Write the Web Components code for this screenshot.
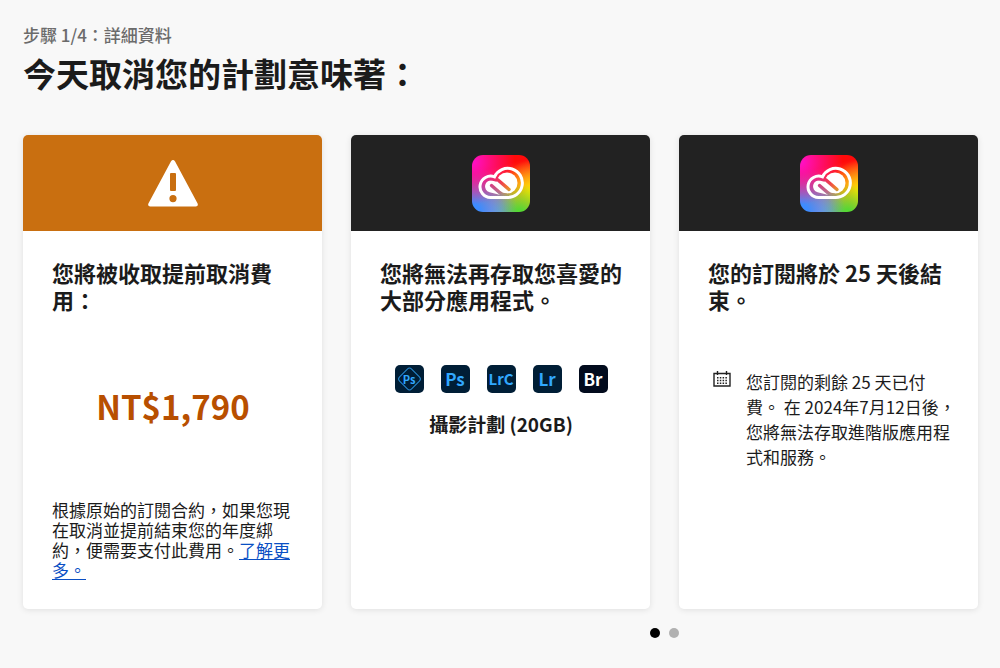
<!DOCTYPE html>
<html lang="zh-Hant">
<head>
<meta charset="utf-8">
<meta name="viewport" content="width=device-width, initial-scale=1">
<title>取消計劃</title>
<style>
body {
    margin: 0;
    background: #f8f8f8;
    color: #1b1b1b;
    font-family: "Noto Sans CJK TC", "Noto Sans", sans-serif;
}
</style>
</head>
<body>
<x-cancel-page></x-cancel-page>

<script>
'use strict';

const define = (name, html) => {
    customElements.define(name, class extends HTMLElement {
        constructor() {
            super();
            this.attachShadow({mode: 'open'}).innerHTML = html;
        }
    });
};

define('x-alert-icon', /*html*/`
    <style>
    :host, svg {
        display: block;
    }
    </style>
    <svg width="50" height="48" viewBox="0 0 50 48" aria-hidden="true">
        <path fill="#fff" fill-rule="evenodd" d="M22.900 2.500Q25-.3 27.100 2.500L49.600 44.500Q50.600 47.500 47.800 47.500H2.200Q-.6 47.500.4 44.500ZM23 14Q22 14 22 15V31Q22 32 23 32H27Q28 32 28 31V15Q28 14 27 14ZM25 36A3.600 3.600 0 1 0 25 43.200A3.600 3.600 0 1 0 25 36Z"/>
    </svg>
`);

define('x-cloud-logo', /*html*/`
    <style>
    :host {
        display: block;
        width: 58px;
        height: 57px;
        border-radius: 11px;
        background:
            radial-gradient(circle at 0% 12%, #ff10c0 4%, rgba(255, 16, 192, 0) 56%),
            radial-gradient(circle at 0% 100%, #3d8cff 10%, rgba(110, 120, 255, 0) 56%),
            radial-gradient(circle at 82% 104%, #56d832 6%, rgba(110, 216, 50, 0) 40%),
            radial-gradient(circle at 104% 66%, #ffe000 6%, rgba(255, 216, 0, 0) 46%),
            radial-gradient(circle at 45% 105%, #b0a0e0 2%, rgba(190, 150, 210, 0) 42%),
            linear-gradient(165deg, #ff0a0a 25%, #ff5a2a 60%, #ff9050 100%);
    }
    svg {
        display: block;
    }
    </style>
    <svg width="58" height="57" viewBox="0 0 58 57" fill="none" stroke-linecap="round" aria-hidden="true">
        <mask id="stripes" maskUnits="userSpaceOnUse" x="0" y="0" width="58" height="57">
            <rect width="58" height="57" fill="#fff"/>
            <path stroke="#000" stroke-width="3.400" d="M19.500 30.500L27.500 37.500Q30 40 34 40"/>
            <path stroke="#000" stroke-width="3.400" d="M19 23.500Q23 22.500 26 25L37 34.500"/>
        </mask>
        <path stroke="#fff" stroke-width="3" d="M35 42.500H18.500A10.700 10.700 0 1 1 22.500 21.800A14.600 14.600 0 1 1 35 42.500Z"/>
        <g mask="url(#stripes)">
            <circle cx="35" cy="28" r="10.500" fill="#fff"/>
            <path stroke="#fff" stroke-width="12" d="M19 31.500L29 34"/>
        </g>
    </svg>
`);

define('x-calendar-icon', /*html*/`
    <style>
    :host {
        display: block;
        padding-top: 2px;
    }
    svg {
        display: block;
    }
    </style>
    <svg width="18" height="16" viewBox="0 0 18 16" fill="none" stroke="#222" aria-hidden="true">
        <path stroke-width="1.400" d="M1 2.500H17V15H1ZM4.500 0V4M13.500 0V4"/>
        <path stroke-width="1.500" stroke-dasharray="1.500 1.300" d="M4 6.700H14M4 9.500H14M4 12.300H14"/>
    </svg>
`);

define('x-app-icon', /*html*/`
    <style>
    :host {
        display: flex;
        align-items: center;
        justify-content: center;
        position: relative;
        width: 29px;
        height: 28px;
        border-radius: 5px;
        background: #001e36;
        color: #31a8ff;
        font-size: 17px;
        font-weight: 700;
        line-height: 28px;
    }
    :host([kind="bridge"]) {
        background: #020b1d;
        color: #fff;
    }
    :host([kind="express"]) {
        font-size: 11px;
    }
    :host([kind="classic"]) {
        font-size: 15px;
    }
    svg {
        display: none;
        position: absolute;
        inset: 0;
    }
    :host([kind="express"]) svg {
        display: block;
    }
    </style>
    <svg width="29" height="28" viewBox="0 0 29 28" aria-hidden="true">
        <rect x="6" y="5.500" width="17" height="17" rx="3" transform="rotate(45 14.500 14)" fill="none" stroke="#2688d0"/>
    </svg>
    <slot></slot>
`);

define('x-plan-card', /*html*/`
    <style>
    :host {
        display: flex;
        flex-direction: column;
        min-width: 0;
        border-radius: 5px;
        overflow: hidden;
        background: #fff;
        box-shadow: 0 1px 6px rgba(0, 0, 0, .1);
    }
    .banner {
        display: flex;
        align-items: center;
        justify-content: center;
        height: 96px;
        background: #222;
    }
    :host([warning]) .banner {
        background: #c96f10;
    }
    .body {
        flex: 1;
        display: flex;
        flex-direction: column;
        padding: 28px 28px 29px 29px;
    }
    h2 {
        margin: 0;
        min-height: 54px;
        font-size: 22px;
        font-weight: 700;
        line-height: 27px;
    }
    </style>
    <div class="banner"><slot name="icon"></slot></div>
    <div class="body">
        <h2><slot name="title"></slot></h2>
        <slot></slot>
    </div>
`);

define('x-pager', /*html*/`
    <style>
    :host {
        display: flex;
        justify-content: center;
        gap: 9px;
    }
    button {
        width: 10px;
        height: 10px;
        padding: 0;
        border: 0;
        border-radius: 50%;
        background: #b1b1b1;
    }
    button[aria-current] {
        background: #000;
    }
    </style>
    <button type="button" aria-label="1" aria-current="true"></button>
    <button type="button" aria-label="2"></button>
`);

define('x-cancel-page', /*html*/`
    <style>
    :host {
        display: block;
        padding: 23px 22px 30px 23px;
    }
    .step {
        margin: 0;
        color: #6b6b6b;
        font-size: 17px;
        font-weight: 500;
        line-height: 24px;
    }
    h1 {
        margin: 0 0 36px;
        font-size: 33px;
        font-weight: 700;
        line-height: 52px;
    }
    .cards {
        display: grid;
        grid-template-columns: repeat(3, 1fr);
        gap: 19px 29px;
    }
    .price {
        margin: 66px 0 67px;
        color: #b84f00;
        font-size: 33px;
        font-weight: 700;
        line-height: 54px;
        text-align: center;
    }
    .note {
        margin: 0;
        font-size: 17px;
        line-height: 20px;
    }
    a {
        color: #0a4fc4;
        text-underline-offset: 2px;
    }
    .apps {
        display: flex;
        justify-content: center;
        gap: 17px;
        margin-top: 52px;
    }
    .plan {
        margin: 17px 0 0;
        font-size: 19px;
        font-weight: 700;
        line-height: 27px;
        text-align: center;
    }
    .remaining {
        display: flex;
        gap: 15px;
        margin: 56px -8px 0 0;
        padding-left: 5px;
    }
    .remaining p {
        margin: 0;
        font-size: 17px;
        line-height: 25px;
    }
    x-pager {
        grid-column: 2 / span 2;
    }
    </style>
    <p class="step">步驟 1/4：詳細資料</p>
    <h1>今天取消您的計劃意味著：</h1>
    <div class="cards">
        <x-plan-card warning>
            <x-alert-icon slot="icon"></x-alert-icon>
            <span slot="title">您將被收取提前取消費用：</span>
            <div class="price">NT$1,790</div>
            <p class="note">根據原始的訂閱合約，如果您現在取消並提前結束您的年度綁約，便需要支付此費用。<a href="#more">了解更多。</a></p>
        </x-plan-card>
        <x-plan-card>
            <x-cloud-logo slot="icon"></x-cloud-logo>
            <span slot="title">您將無法再存取您喜愛的大部分應用程式。</span>
            <div class="apps">
                <x-app-icon kind="express">Ps</x-app-icon>
                <x-app-icon>Ps</x-app-icon>
                <x-app-icon kind="classic">LrC</x-app-icon>
                <x-app-icon>Lr</x-app-icon>
                <x-app-icon kind="bridge">Br</x-app-icon>
            </div>
            <p class="plan">攝影計劃 (20GB)</p>
        </x-plan-card>
        <x-plan-card>
            <x-cloud-logo slot="icon"></x-cloud-logo>
            <span slot="title">您的訂閱將於 25 天後結束。</span>
            <div class="remaining">
                <x-calendar-icon></x-calendar-icon>
                <p>您訂閱的剩餘 25 天已付費。 在 2024年7月12日後，您將無法存取進階版應用程式和服務。</p>
            </div>
        </x-plan-card>
        <x-pager></x-pager>
    </div>
`);
</script>
</body>
</html>
